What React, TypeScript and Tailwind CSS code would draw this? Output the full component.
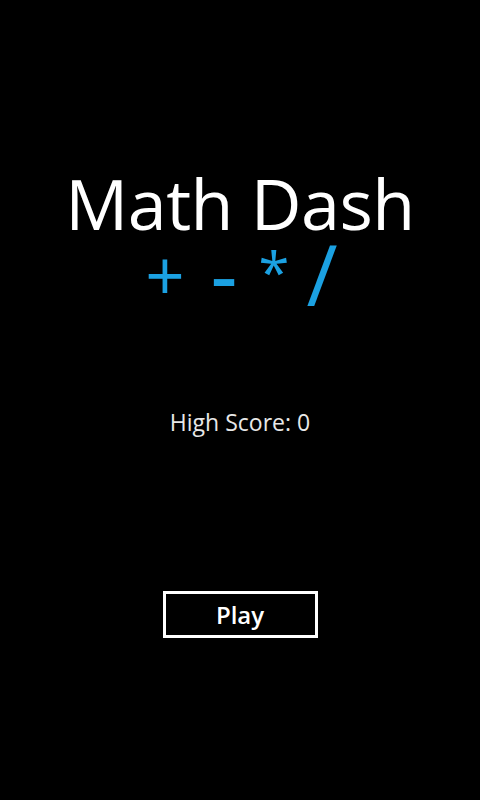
import React from "react";

const App = () => {
  return (
    <div
      className="w-[480px] h-[800px] bg-black text-white flex flex-col items-center"
      style={{ fontFamily: '"Open Sans", "Noto Sans", sans-serif' }}
    >
      <h1 className="mt-[165px] text-[70px] leading-[76px] font-medium tracking-[-0.5px]">
        Math Dash
      </h1>
      {/* operator row, each glyph sized on its own to match the original font */}
      <div className="w-full h-[70px] pl-[135px] flex items-start text-[#1ba1e2]">
        <span className="w-[60px] text-center text-[69px] leading-[60px] mt-[3px]">+</span>
        <span className="w-[58px] text-center text-[60px] leading-none scale-x-[1.4] scale-y-[1.6]">-</span>
        <span className="w-[42px] text-center text-[56px] leading-none mt-[2px]">*</span>
        <span className="w-[54px] text-center text-[85px] leading-[64px]">/</span>
      </div>
      <p className="mt-[97px] text-[23px] leading-[28px] text-[#e8e8e8]">High Score: 0</p>
      <button className="mt-[155px] w-[155px] h-[47px] border-[3px] border-white text-[24px] leading-none font-semibold">
        Play
      </button>
    </div>
  );
};

export default App;
